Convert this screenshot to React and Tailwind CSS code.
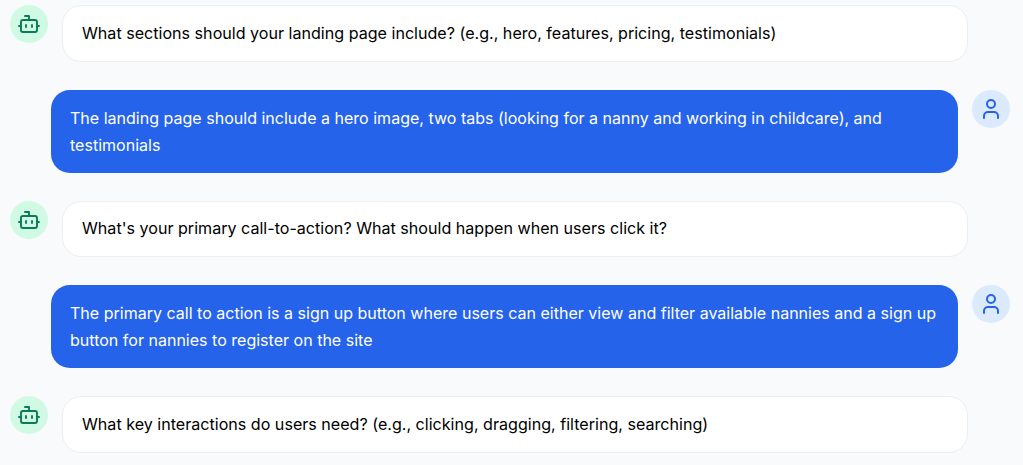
import React from "react";
import { Bot, User } from "lucide-react";

const messages = [
  { from: "bot", text: "What sections should your landing page include? (e.g., hero, features, pricing, testimonials)" },
  { from: "user", text: "The landing page should include a hero image, two tabs (looking for a nanny and working in childcare), and testimonials" },
  { from: "bot", text: "What's your primary call-to-action? What should happen when users click it?" },
  { from: "user", text: "The primary call to action is a sign up button where users can either view and filter available nannies and a sign up button for nannies to register on the site" },
  { from: "bot", text: "What key interactions do users need? (e.g., clicking, dragging, filtering, searching)" },
];

function BotMessage({ text }) {
  return (
    <div className="flex items-start gap-[14px] pr-[42px]">
      <div className="w-[38px] h-[38px] shrink-0 rounded-full bg-[#d1fae5] flex items-center justify-center">
        <Bot className="w-[24px] h-[24px] text-[#0b7a58]" strokeWidth={1.9} />
      </div>
      <div className="flex-1 h-[56.4px] flex items-center px-[19px] bg-white border border-[#eceef1] rounded-[19px] text-black text-[16.1px] leading-[27px]">
        {text}
      </div>
    </div>
  );
}

function UserMessage({ text }) {
  return (
    <div className="flex items-start gap-[14px] pl-[41px]">
      <div className="flex-1 h-[82.6px] flex items-center px-[19px] bg-[#2563eb] text-white rounded-[19px] text-[16.04px] leading-[27px]">
        <p className="pt-[1px]">{text}</p>
      </div>
      <div className="w-[38px] h-[38px] shrink-0 rounded-full bg-[#dbeafe] flex items-center justify-center">
        <User className="w-[24px] h-[24px] text-[#2563eb]" strokeWidth={2} />
      </div>
    </div>
  );
}

export default function App() {
  return (
    <div className="h-[465px] overflow-hidden bg-[#f9fafb] pt-[5.3px] pl-[10px] pr-[13px] flex flex-col gap-[28.25px] font-['Inter',sans-serif]">
      {messages.map((m, i) =>
        m.from === "bot" ? <BotMessage key={i} text={m.text} /> : <UserMessage key={i} text={m.text} />
      )}
    </div>
  );
}
